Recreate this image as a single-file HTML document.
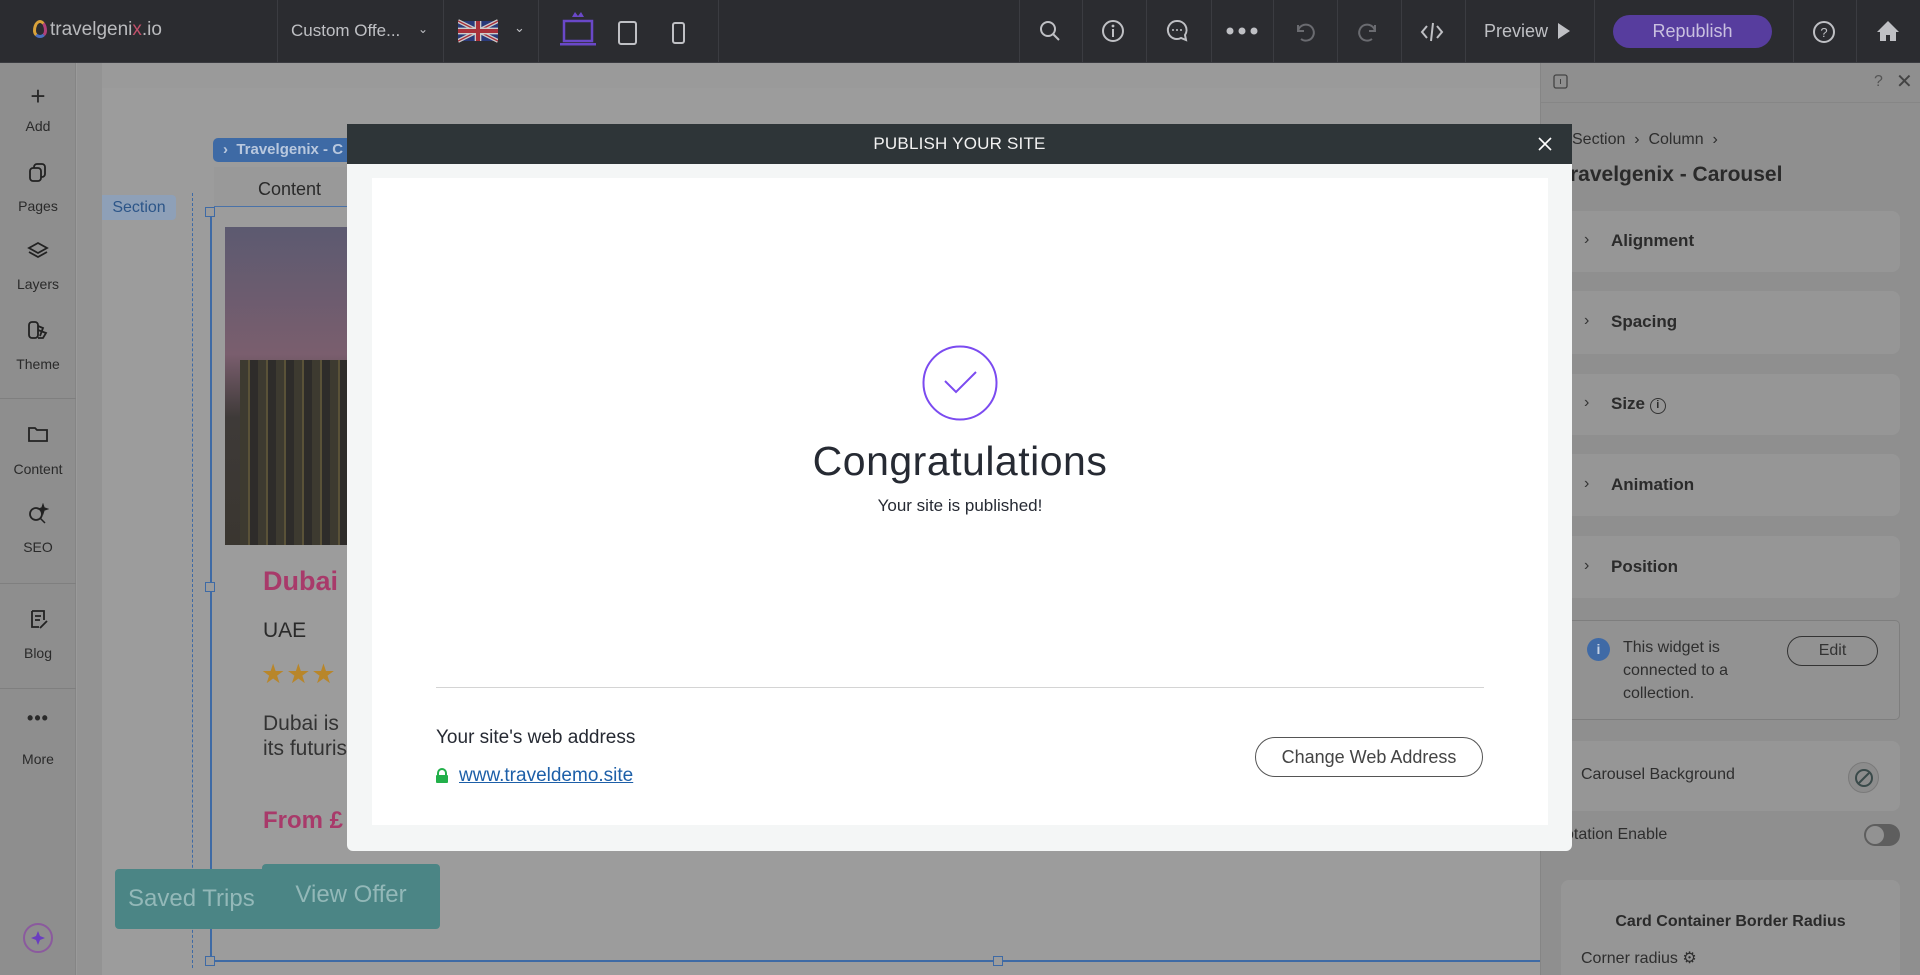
<!DOCTYPE html>
<html style="width:1920px;height:975px;overflow:hidden"><head><meta charset="utf-8">
<style>
*{box-sizing:border-box;margin:0;padding:0}
body{width:1920px;height:975px;overflow:hidden;position:relative;background:#9a9a9a;font-family:"Liberation Sans",sans-serif;color:#2a2a2a}
.a{position:absolute}
.top{left:0;top:0;width:1920px;height:63px;background:#2b2c30;border-bottom:1px solid #3a3b40}
.sep{position:absolute;top:0;width:1px;height:63px;background:#3b3c41}
.tw{color:#bfc0c4;font-size:17px}
.side{left:0;top:63px;width:76px;height:912px;background:#8e8e8e;border-right:1px solid #858585}
.si{position:absolute;left:0;width:76px;text-align:center;font-size:14px;color:#2a2a2a}
.sd{position:absolute;left:0;width:76px;height:1px;background:#7f7f7f}
.rp{left:1540px;top:63px;width:380px;height:912px;background:#8f8f8f;border-left:1px solid #858585}
.card{position:absolute;left:1540px;width:360px;background:#969696;border-radius:0 8px 8px 0}
.ct{position:absolute;left:71px;font-size:17px;color:#2b2b2b;font-weight:bold}
.chev{position:absolute;left:44px;font-size:16px;color:#333}
</style></head><body>
<!-- top bar -->
<div class="a top">
 <div class="a" style="left:33px;top:20px;width:14px;height:18px;border-radius:50% 50% 50% 50%/60% 60% 40% 40%;border:3px solid #d9a23a;border-right-color:#b0407a;border-bottom-color:#4a6fc0"></div>
 <div class="a tw" style="left:50px;top:19px;font-size:19px;color:#b9babd">travelgeni<span style="color:#c0506a">x</span>.io</div>
 <div class="sep" style="left:277px"></div>
 <div class="a tw" style="left:291px;top:21px">Custom Offe...</div>
 <div class="a tw" style="left:418px;top:22px;font-size:12px">&#8964;</div>
 <div class="sep" style="left:443px"></div>
 <svg class="a" style="left:458px;top:17px" width="40" height="28" viewBox="0 0 60 30"><rect width="60" height="30" fill="#2a3a7a"/><path d="M0 0L60 30M60 0L0 30" stroke="#ccc" stroke-width="6"/><path d="M0 0L60 30M60 0L0 30" stroke="#a8303a" stroke-width="2"/><path d="M30 0V30M0 15H60" stroke="#ccc" stroke-width="10"/><path d="M30 0V30M0 15H60" stroke="#a8303a" stroke-width="6"/></svg>
 <div class="a tw" style="left:514px;top:20px;font-size:13px">&#8964;</div>
 <div class="sep" style="left:538px"></div>
 <svg class="a" style="left:558px;top:8px" width="40" height="40" viewBox="0 0 40 40"><path d="M14 9l3-5 3 4 3-4 3 5z" fill="#6a48c8"/><rect x="6" y="13" width="28" height="20" fill="none" stroke="#6a48c8" stroke-width="2.5"/><rect x="2" y="35" width="36" height="2.5" fill="#6a48c8"/></svg>
 <svg class="a" style="left:617px;top:20px" width="22" height="26"><rect x="2" y="2" width="17" height="22" rx="2" fill="none" stroke="#bfc0c4" stroke-width="2"/></svg>
 <svg class="a" style="left:671px;top:21px" width="16" height="24"><rect x="2" y="2" width="11" height="20" rx="2" fill="none" stroke="#bfc0c4" stroke-width="2"/></svg>
 <div class="sep" style="left:718px"></div>
 <div class="sep" style="left:1019px"></div>
 <svg class="a" style="left:1038px;top:19px" width="24" height="24"><circle cx="10" cy="10" r="7" fill="none" stroke="#bfc0c4" stroke-width="2"/><path d="M15 15l6 6" stroke="#bfc0c4" stroke-width="2"/></svg>
 <div class="sep" style="left:1082px"></div>
 <svg class="a" style="left:1101px;top:19px" width="26" height="26"><circle cx="12" cy="12" r="10" fill="none" stroke="#bfc0c4" stroke-width="2"/><path d="M12 10v8" stroke="#bfc0c4" stroke-width="2"/><circle cx="12" cy="7" r="1.4" fill="#bfc0c4"/></svg>
 <div class="sep" style="left:1146px"></div>
 <svg class="a" style="left:1165px;top:18px" width="26" height="26"><path d="M12 3a9 9 0 1 0 4 17l5 2-1-5A9 9 0 0 0 12 3z" fill="none" stroke="#bfc0c4" stroke-width="2"/><circle cx="8" cy="12" r="1" fill="#bfc0c4"/><circle cx="12" cy="12" r="1" fill="#bfc0c4"/><circle cx="16" cy="12" r="1" fill="#bfc0c4"/></svg>
 <div class="sep" style="left:1211px"></div>
 <svg class="a" style="left:1225px;top:26px" width="36" height="10"><circle cx="5" cy="5" r="3.5" fill="#bfc0c4"/><circle cx="17" cy="5" r="3.5" fill="#bfc0c4"/><circle cx="29" cy="5" r="3.5" fill="#bfc0c4"/></svg>
 <div class="sep" style="left:1273px"></div>
 <svg class="a" style="left:1293px;top:20px" width="24" height="24"><path d="M5 5v6h6M5 11a8 8 0 1 1 3 8" fill="none" stroke="#6a6b70" stroke-width="2"/></svg>
 <div class="sep" style="left:1337px"></div>
 <svg class="a" style="left:1356px;top:20px" width="24" height="24"><path d="M19 5v6h-6M19 11a8 8 0 1 0-3 8" fill="none" stroke="#6a6b70" stroke-width="2"/></svg>
 <div class="sep" style="left:1401px"></div>
 <svg class="a" style="left:1419px;top:19px" width="26" height="26"><path d="M8 7l-5 6 5 6M18 7l5 6-5 6M14 4l-2 18" fill="none" stroke="#bfc0c4" stroke-width="2"/></svg>
 <div class="sep" style="left:1465px"></div>
 <div class="a tw" style="left:1484px;top:21px;font-size:18px">Preview</div>
 <svg class="a" style="left:1557px;top:22px" width="14" height="18"><path d="M1 1l12 8-12 8z" fill="#bfc0c4"/></svg>
 <div class="sep" style="left:1594px"></div>
 <div class="a" style="left:1613px;top:15px;width:159px;height:33px;border-radius:17px;background:#573d9e;color:#c9c0e0;font-size:18px;text-align:center;line-height:33px">Republish</div>
 <div class="sep" style="left:1793px"></div>
 <svg class="a" style="left:1811px;top:19px" width="26" height="26"><circle cx="13" cy="13" r="10" fill="none" stroke="#bfc0c4" stroke-width="2"/><text x="13" y="18" font-size="13" text-anchor="middle" fill="#bfc0c4" font-family="Liberation Sans">?</text></svg>
 <div class="sep" style="left:1856px"></div>
 <svg class="a" style="left:1876px;top:20px" width="24" height="22"><path d="M12 1L1 12h3v9h6v-6h4v6h6v-9h3z" fill="#bfc0c4"/></svg>
</div>
<!-- sidebar -->
<div class="a side">
 <div class="si" style="top:18px;font-size:26px;font-weight:300">+</div><div class="si" style="top:55px">Add</div>
 <svg class="a" style="left:28px;top:99px" width="20" height="22"><rect x="6" y="2" width="11" height="13" rx="3" fill="none" stroke="#222" stroke-width="1.8"/><rect x="2" y="6" width="11" height="13" rx="3" fill="#8e8e8e" stroke="#222" stroke-width="1.8"/></svg>
 <div class="si" style="top:135px">Pages</div>
 <svg class="a" style="left:27px;top:178px" width="22" height="20"><path d="M11 2l9 5-9 5-9-5z M2 11l9 5 9-5" fill="none" stroke="#222" stroke-width="1.8"/></svg>
 <div class="si" style="top:213px">Layers</div>
 <svg class="a" style="left:27px;top:257px" width="22" height="20"><rect x="2" y="2" width="9" height="16" rx="3" fill="none" stroke="#222" stroke-width="1.8"/><path d="M11 6l5 2-3 8M11 10l8 3-3 5h-5" fill="none" stroke="#222" stroke-width="1.8"/></svg>
 <div class="si" style="top:293px">Theme</div>
 <div class="sd" style="top:335px"></div>
 <svg class="a" style="left:27px;top:362px" width="22" height="18"><path d="M2 3h6l2 2h10v11H2z" fill="none" stroke="#222" stroke-width="1.8"/></svg>
 <div class="si" style="top:398px">Content</div>
 <svg class="a" style="left:27px;top:440px" width="22" height="22"><circle cx="9" cy="11" r="6" fill="none" stroke="#222" stroke-width="1.8"/><path d="M13 15l5 5M16 2l1 3 3 1-3 1-1 3-1-3-3-1 3-1z" stroke="#222" stroke-width="1.5" fill="#222"/></svg>
 <div class="si" style="top:476px">SEO</div>
 <div class="sd" style="top:520px"></div>
 <svg class="a" style="left:28px;top:546px" width="22" height="22"><path d="M4 2h12v9M4 2v16h7" fill="none" stroke="#222" stroke-width="1.8"/><path d="M7 7h6M7 11h5M12 19l7-7" stroke="#222" stroke-width="1.8"/></svg>
 <div class="si" style="top:582px">Blog</div>
 <div class="sd" style="top:625px"></div>
 <div class="si" style="top:645px;font-size:18px;font-weight:bold;letter-spacing:1px">•••</div>
 <div class="si" style="top:688px">More</div>
 <svg class="a" style="left:22px;top:859px" width="32" height="32"><circle cx="16" cy="16" r="14" fill="none" stroke="#8b5a9e" stroke-width="2"/><path d="M16 9l2 5 5 2-5 2-2 5-2-5-5-2 5-2z" fill="#6a3ec0"/></svg>
</div>
<!-- canvas -->
<div class="a" style="left:77px;top:63px;width:25px;height:912px;background:#939393"></div>
<div class="a" style="left:102px;top:88px;width:1438px;height:887px;background:#9c9c9c"></div>
<div class="a" style="left:102px;top:195px;width:74px;height:25px;background:#8ea0b8;border-radius:0 4px 4px 0;color:#2c5588;font-size:16px;text-align:center;line-height:25px">Section</div>
<div class="a" style="left:213px;top:138px;width:140px;height:24px;background:#3e6aa5;border-radius:5px;color:#b9c8de;font-size:15px;font-weight:bold;line-height:24px;padding-left:10px">›&nbsp; Travelgenix - C</div>
<div class="a" style="left:214px;top:167px;width:140px;height:40px;background:#999;border-bottom:1px solid #4a72a8"></div>
<div class="a" style="left:258px;top:179px;font-size:18px;color:#2a2a2a">Content</div>
<div class="a" style="left:192px;top:193px;height:775px;border-left:1px dashed #3e6aa5"></div>
<div class="a" style="left:210px;top:212px;width:2px;height:750px;background:#3e6aa5"></div>
<div class="a" style="left:210px;top:960px;width:1330px;height:2px;background:#3e6aa5"></div>
<div class="a" style="left:205px;top:207px;width:10px;height:10px;border:1.5px solid #3e6aa5;background:#9c9c9c"></div>
<div class="a" style="left:205px;top:582px;width:10px;height:10px;border:1.5px solid #3e6aa5;background:#9c9c9c"></div>
<div class="a" style="left:205px;top:956px;width:10px;height:10px;border:1.5px solid #3e6aa5;background:#9c9c9c"></div>
<div class="a" style="left:993px;top:956px;width:10px;height:10px;border:1.5px solid #3e6aa5;background:#9c9c9c"></div>
<div class="a" style="left:225px;top:227px;width:125px;height:318px;background:linear-gradient(180deg,#5c5a70 0%,#7a5e6e 40%,#3e3a38 60%,#3a3630 100%)"></div>
<div class="a" style="left:240px;top:360px;width:110px;height:185px;background:repeating-linear-gradient(90deg,#3d3a30 0 8px,#5a5238 8px 10px,#2e2c2a 10px 18px)"></div>
<div class="a" style="left:263px;top:566px;font-size:27px;font-weight:bold;color:#a83a6a">Dubai</div>
<div class="a" style="left:263px;top:619px;font-size:21px;color:#2a2a2a">UAE</div>
<div class="a" style="left:261px;top:659px;font-size:27px;color:#b8862a;letter-spacing:1px">★★★</div>
<div class="a" style="left:263px;top:711px;font-size:21px;color:#333;line-height:25px">Dubai is<br>its futuris</div>
<div class="a" style="left:263px;top:807px;font-size:24px;font-weight:bold;color:#a83a6a">From £</div>
<div class="a" style="left:115px;top:869px;width:156px;height:60px;background:#4b8585;border-radius:4px;color:#93b8b8;font-size:24px;line-height:60px;padding-left:13px">Saved Trips</div>
<div class="a" style="left:262px;top:864px;width:178px;height:65px;background:#4b8585;border-radius:4px;color:#93b8b8;font-size:24px;line-height:62px;text-align:center">View Offer</div>
<!-- right panel -->
<div class="a rp">
 <div class="a" style="left:0;top:0;width:380px;height:40px;border-bottom:1px solid #868686"></div>
 <svg class="a" style="left:12px;top:11px" width="16" height="16"><rect x="1" y="1" width="13" height="13" rx="2" fill="none" stroke="#444" stroke-width="1.3"/><path d="M7.5 5v5" stroke="#444"/></svg>
 <div class="a" style="left:333px;top:10px;font-size:16px;color:#555">?</div>
<div class="a" style="left:355px;top:6px;font-size:20px;color:#444">✕</div>
 <div class="a" style="left:31px;top:68px;font-size:16px;color:#2e2e2e">Section &nbsp;›&nbsp; Column &nbsp;›</div>
 <div class="a" style="left:29px;top:100px;font-size:21px;font-weight:bold;color:#2a2a2a">ravelgenix - Carousel</div>
</div>
<div class="card" style="top:211px;height:61px"><span class="chev" style="top:20px">›</span><span class="ct" style="top:20px">Alignment</span></div>
<div class="card" style="top:291px;height:63px"><span class="chev" style="top:21px">›</span><span class="ct" style="top:21px">Spacing</span></div>
<div class="card" style="top:374px;height:61px"><span class="chev" style="top:20px">›</span><span class="ct" style="top:20px">Size <span style="display:inline-block;width:16px;height:16px;border:1.5px solid #333;border-radius:50%;font-size:11px;text-align:center;line-height:13px;vertical-align:1px">i</span></span></div>
<div class="card" style="top:454px;height:62px"><span class="chev" style="top:21px">›</span><span class="ct" style="top:21px">Animation</span></div>
<div class="card" style="top:536px;height:62px"><span class="chev" style="top:21px">›</span><span class="ct" style="top:21px">Position</span></div>
<div class="a" style="left:1540px;top:620px;width:360px;height:100px;border:1px solid #7e7e7e;border-left:none;border-radius:0 5px 5px 0;background:#929292"></div>
<div class="a" style="left:1587px;top:638px;width:23px;height:23px;border-radius:50%;background:#3f6aa6;color:#c5d2e5;font-size:14px;font-weight:bold;text-align:center;line-height:23px">i</div>
<div class="a" style="left:1623px;top:636px;font-size:16px;line-height:23px;color:#2e2e2e">This widget is<br>connected to a<br>collection.</div>
<div class="a" style="left:1787px;top:636px;width:91px;height:30px;border:1.5px solid #333;border-radius:15px;font-size:16px;text-align:center;line-height:27px;color:#333">Edit</div>
<div class="card" style="top:741px;height:70px"></div>
<div class="a" style="left:1581px;top:766px;font-size:16px;color:#2e2e2e">Carousel Background</div>
<div class="a" style="left:1848px;top:762px;width:31px;height:31px;border-radius:50%;border:1px solid #7a7a7a;background:#8c8c8c"></div>
<svg class="a" style="left:1853px;top:767px" width="22" height="22"><circle cx="11" cy="11" r="8" fill="none" stroke="#3a4a4a" stroke-width="2"/><path d="M6 16L16 6" stroke="#3a4a4a" stroke-width="2"/></svg>
<div class="a" style="left:1565px;top:826px;font-size:16px;color:#2e2e2e">otation Enable</div>
<div class="a" style="left:1864px;top:824px;width:36px;height:22px;border-radius:11px;background:#5e5e5e"></div>
<div class="a" style="left:1866px;top:826px;width:18px;height:18px;border-radius:50%;background:#929292"></div>
<div class="a" style="left:1561px;top:880px;width:339px;height:95px;background:#969696;border-radius:8px 8px 0 0"></div>
<div class="a" style="left:1561px;top:913px;width:339px;text-align:center;font-size:16px;font-weight:bold;color:#2a2a2a">Card Container Border Radius</div>
<div class="a" style="left:1581px;top:948px;font-size:16px;color:#2e2e2e">Corner radius ⚙</div>
<!-- modal -->
<div class="a" style="left:347px;top:124px;width:1225px;height:727px;background:#f4f6f6;border-radius:0 0 6px 6px;overflow:hidden">
 <div class="a" style="left:0;top:0;width:1225px;height:40px;background:#2e3538"></div>
 <div class="a" style="left:0;top:10px;width:1225px;text-align:center;color:#f2f2f2;font-size:17px;letter-spacing:0.2px">PUBLISH YOUR SITE</div>
 <svg class="a" style="left:1190px;top:12px" width="16" height="16"><path d="M2 2l12 12M14 2L2 14" stroke="#fff" stroke-width="1.6"/></svg>
 <div class="a" style="left:25px;top:54px;width:1176px;height:647px;background:#fff"></div>
</div>
<svg class="a" style="left:921px;top:344px" width="78" height="78"><circle cx="39" cy="39" r="36.5" fill="none" stroke="#7b4bf0" stroke-width="2"/><path d="M24 37l11 11 20-20" fill="none" stroke="#7b4bf0" stroke-width="2"/></svg>
<div class="a" style="left:660px;top:438px;width:600px;text-align:center;font-size:41px;color:#262a33;letter-spacing:0.5px">Congratulations</div>
<div class="a" style="left:660px;top:496px;width:600px;text-align:center;font-size:17px;color:#262a33">Your site is published!</div>
<div class="a" style="left:436px;top:687px;width:1048px;height:1px;background:#d4d4d4"></div>
<div class="a" style="left:436px;top:727px;font-size:19px;color:#262a33">Your site's web address</div>
<svg class="a" style="left:435px;top:768px" width="14" height="16"><path d="M3 7V5a4 4 0 0 1 8 0v2" fill="none" stroke="#22b04a" stroke-width="2"/><rect x="1" y="7" width="12" height="8" rx="1" fill="#22b04a"/></svg>
<div class="a" style="left:459px;top:765px;font-size:19px;color:#1d5fa8;text-decoration:underline">www.traveldemo.site</div>
<div class="a" style="left:1255px;top:737px;width:228px;height:40px;border:1px solid #555;border-radius:20px;font-size:18px;color:#444;text-align:center;line-height:38px">Change Web Address</div>
</body></html>
